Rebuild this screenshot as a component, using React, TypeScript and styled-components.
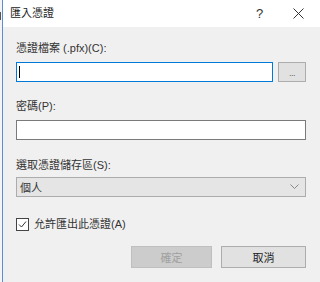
import React from "react";
import styled, { createGlobalStyle } from "styled-components";

const GlobalStyle = createGlobalStyle`
  html, body {
    margin: 0;
    padding: 0;
    background: #ffffff;
  }
  body {
    font-family: "Liberation Sans", "Noto Sans CJK TC", sans-serif;
    font-size: 11px;
    color: #000;
  }
`;

const Screen = styled.div`
  display: flex;
  width: 320px;
  height: 282px;
  overflow: hidden;
`;

const Behind = styled.div`
  width: 2px;
  background: #f4f4f4;
  position: relative;
  overflow: hidden;
  &::after {
    content: "";
    position: absolute;
    left: 0;
    top: 12px;
    width: 1px;
    height: 8px;
    background: #555;
  }
`;

const Dialog = styled.div`
  flex: 1;
  display: flex;
  flex-direction: column;
  border-left: 1px solid #5b8fd1;
  background: #f0f0f0;
`;

const TitleBar = styled.div`
  height: 27px;
  display: flex;
  align-items: center;
  background: #ffffff;
`;

const Title = styled.div`
  flex: 1;
  padding-left: 7px;
  line-height: 16px;
  margin-top: -1px;
  color: #222;
`;

const TitleButton = styled.div`
  width: 39px;
  height: 27px;
  display: flex;
  align-items: center;
  justify-content: center;
  font-size: 13px;
  color: #333;
`;

const Body = styled.div`
  display: flex;
  flex-direction: column;
  padding: 13px 14px 0 13px;
`;

const Label = styled.div<{ $top: number; $gap: number }>`
  margin-top: ${(p) => p.$top}px;
  margin-bottom: ${(p) => p.$gap}px;
  line-height: 16px;
  color: #333;
`;

const Row = styled.div`
  display: flex;
  gap: 5px;
`;

const TextBox = styled.div<{ $focused?: boolean }>`
  flex: 1 0 auto;
  height: 20px;
  box-sizing: border-box;
  background: #fff;
  border: 1px solid ${(p) => (p.$focused ? "#0078d7" : "#7a7a7a")};
  position: relative;
`;

const Caret = styled.span`
  position: absolute;
  left: 2px;
  top: 3px;
  width: 1px;
  height: 12px;
  background: #000;
`;

const BrowseButton = styled.div`
  width: 28px;
  height: 20px;
  box-sizing: border-box;
  background: #e1e1e1;
  border: 1px solid #adadad;
  display: flex;
  align-items: center;
  justify-content: center;
  font-size: 9px;
  color: #666;
  letter-spacing: -0.5px;
  padding-top: 2px;
`;

const Select = styled.div`
  height: 20px;
  box-sizing: border-box;
  background: #e5e5e5;
  border: 1px solid #acacac;
  display: flex;
  align-items: center;
  justify-content: space-between;
  padding: 0 6px 0 3px;
  color: #333;
`;

const CheckRow = styled.div`
  display: flex;
  align-items: center;
  gap: 5px;
  margin-top: 19px;
  line-height: 16px;
  color: #333;
`;

const CheckBox = styled.div`
  width: 13px;
  height: 13px;
  box-sizing: border-box;
  border: 1px solid #444;
  background: #fff;
  display: flex;
  align-items: center;
  justify-content: center;
`;

const Buttons = styled.div`
  display: flex;
  justify-content: flex-end;
  gap: 9px;
  margin-top: 14px;
`;

const Button = styled.div<{ $disabled?: boolean; $width: number }>`
  width: ${(p) => p.$width}px;
  height: 22px;
  box-sizing: border-box;
  display: flex;
  align-items: center;
  justify-content: center;
  background: ${(p) => (p.$disabled ? "#cccccc" : "#e1e1e1")};
  border: 1px solid ${(p) => (p.$disabled ? "#bfbfbf" : "#adadad")};
  color: ${(p) => (p.$disabled ? "#a0a0a0" : "#222")};
`;

const App: React.FC = () => {
  return (
    <Screen>
      <GlobalStyle />
      <Behind />
      <Dialog>
        <TitleBar>
          <Title>匯入憑證</Title>
          <TitleButton>?</TitleButton>
          <TitleButton>
            <svg width="11" height="11" viewBox="0 0 11 11">
              <path d="M0.5 0.5 L10.5 10.5 M10.5 0.5 L0.5 10.5" stroke="#333" strokeWidth="1" fill="none" />
            </svg>
          </TitleButton>
          <div style={{ width: 2 }} />
        </TitleBar>
        <Body>
          <Label $top={0} $gap={6}>憑證檔案 (.pfx)(C):</Label>
          <Row>
            <TextBox $focused>
              <Caret />
            </TextBox>
            <BrowseButton>...</BrowseButton>
          </Row>
          <Label $top={16} $gap={6}>密碼(P):</Label>
          <TextBox />
          <Label $top={17} $gap={4}>選取憑證儲存區(S):</Label>
          <Select>
            <span>個人</span>
            <svg width="9" height="6" viewBox="0 0 9 6">
              <path d="M0.5 0.5 L4.5 4.5 L8.5 0.5" stroke="#888" strokeWidth="1" fill="none" />
            </svg>
          </Select>
          <CheckRow>
            <CheckBox>
              <svg width="9" height="9" viewBox="0 0 9 9">
                <path d="M1 4.5 L3.5 7 L8 1.5" stroke="#333" strokeWidth="1" fill="none" />
              </svg>
            </CheckBox>
            <span>允許匯出此憑證(A)</span>
          </CheckRow>
          <Buttons>
            <Button $disabled $width={81}>確定</Button>
            <Button $width={85}>取消</Button>
          </Buttons>
        </Body>
      </Dialog>
    </Screen>
  );
};

export default App;
